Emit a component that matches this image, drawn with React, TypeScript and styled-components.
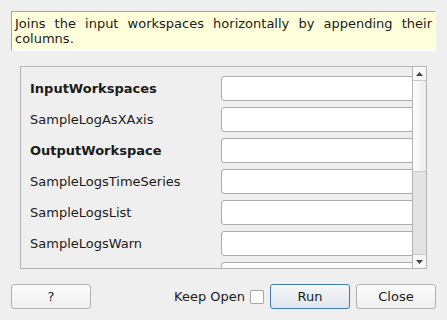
import React from "react";
import styled, { createGlobalStyle } from "styled-components";

const Global = createGlobalStyle`
  html, body { margin: 0; padding: 0; background: #efefef; }
  body { font-family: "DejaVu Sans", sans-serif; font-size: 13px; color: #1b1b1b; }
`;

const Dialog = styled.div`
  width: 447px;
  height: 320px;
  box-sizing: border-box;
  padding: 11px 11px 0 11px;
  display: flex;
  flex-direction: column;
  background: #efefef;
`;

const Description = styled.div`
  box-sizing: border-box;
  width: 425px;
  height: 40px;
  padding: 4px 3px 0 3px;
  background: #ffffdc;
  border-top: 1px solid #a4a4a4;
  border-left: 1px solid #a4a4a4;
  border-right: 1px solid #ffffff;
  border-bottom: 1px solid #ffffff;
  line-height: 15px;
  text-align: justify;
`;

const ScrollArea = styled.div`
  margin: 15px 0 0 9px;
  box-sizing: border-box;
  width: 407px;
  height: 203px;
  border: 1px solid #b4b4b4;
  display: flex;
  overflow: hidden;
`;

const Viewport = styled.div`
  flex: 1;
  min-width: 0;
  overflow: hidden;
  padding: 9px 0 0 9px;
  display: flex;
  flex-direction: column;
  gap: 6px;
`;

const Row = styled.div`
  display: flex;
  align-items: center;
  height: 25px;
  flex-shrink: 0;
`;

const Label = styled.div<{ $bold?: boolean }>`
  width: 191px;
  flex-shrink: 0;
  font-weight: ${(p) => (p.$bold ? "bold" : "normal")};
  white-space: nowrap;
`;

const Field = styled.div`
  box-sizing: border-box;
  width: 200px;
  height: 25px;
  flex-shrink: 0;
  background: #ffffff;
  border: 1px solid #ababab;
  border-radius: 3px;
`;

const ScrollBar = styled.div`
  width: 13px;
  flex-shrink: 0;
  border-left: 1px solid #b4b4b4;
  display: flex;
  flex-direction: column;
  background: #e3e3e3;
`;

const ArrowButton = styled.div`
  height: 13px;
  flex-shrink: 0;
  background: #f8f8f8;
  display: flex;
  align-items: center;
  justify-content: center;
`;

const ArrowTop = styled(ArrowButton)`
  border-bottom: 1px solid #c8c8c8;
`;

const ArrowBottom = styled(ArrowButton)`
  border-top: 1px solid #c8c8c8;
  margin-top: auto;
`;

const Thumb = styled.div`
  height: 91px;
  flex-shrink: 0;
  box-sizing: border-box;
  background: linear-gradient(to right, #fdfdfd, #ececec);
  border-bottom: 1px solid #c8c8c8;
`;

const Footer = styled.div`
  margin-top: 15px;
  display: flex;
  align-items: center;
`;

const Button = styled.button<{ $primary?: boolean; $gap?: number }>`
  box-sizing: border-box;
  width: 80px;
  height: 25px;
  padding: 0;
  margin-left: ${(p) => p.$gap ?? 0}px;
  font-family: "DejaVu Sans", sans-serif;
  font-size: 13px;
  color: #1b1b1b;
  border-radius: 3px;
  border: 1px solid ${(p) => (p.$primary ? "#3d7eb0" : "#b0b0b0")};
  background: ${(p) =>
    p.$primary
      ? "linear-gradient(#f4f6f8, #dfe6ee)"
      : "linear-gradient(#fbfbfb, #f0f0f0)"};
`;

const Spacer = styled.div`
  flex: 1;
`;

const KeepOpen = styled.label`
  display: flex;
  align-items: center;
  gap: 5px;
  margin-right: 6px;
`;

const Check = styled.span`
  box-sizing: border-box;
  width: 14px;
  height: 14px;
  background: #ffffff;
  border: 1px solid #a8a8a8;
  border-radius: 1px;
`;

const rows: { name: string; bold?: boolean }[] = [
  { name: "InputWorkspaces", bold: true },
  { name: "SampleLogAsXAxis" },
  { name: "OutputWorkspace", bold: true },
  { name: "SampleLogsTimeSeries" },
  { name: "SampleLogsList" },
  { name: "SampleLogsWarn" },
  { name: "" },
];

export default function App() {
  return (
    <>
      <Global />
      <Dialog>
        <Description>
          Joins the input workspaces horizontally by appending their columns.
        </Description>
        <ScrollArea>
          <Viewport>
            {rows.map((r, i) => (
              <Row key={i}>
                <Label $bold={r.bold}>{r.name}</Label>
                <Field />
              </Row>
            ))}
          </Viewport>
          <ScrollBar>
            <ArrowTop>
              <svg width="7" height="4" viewBox="0 0 7 4">
                <polygon points="0,4 7,4 3.5,0" fill="#444" />
              </svg>
            </ArrowTop>
            <Thumb />
            <ArrowBottom>
              <svg width="7" height="4" viewBox="0 0 7 4">
                <polygon points="0,0 7,0 3.5,4" fill="#444" />
              </svg>
            </ArrowBottom>
          </ScrollBar>
        </ScrollArea>
        <Footer>
          <Button>?</Button>
          <Spacer />
          <KeepOpen>
            Keep Open
            <Check />
          </KeepOpen>
          <Button $primary>Run</Button>
          <Button $gap={6}>Close</Button>
        </Footer>
      </Dialog>
    </>
  );
}
